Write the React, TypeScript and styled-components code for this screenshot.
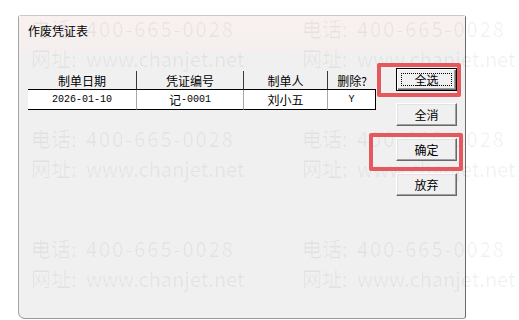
import React from "react";
import styled, { createGlobalStyle } from "styled-components";

const Global = createGlobalStyle`
  html, body { margin: 0; padding: 0; background: #ffffff; }
  body { font-family: "Noto Sans CJK SC", "Liberation Sans", sans-serif; }
`;

const Page = styled.div`
  position: relative;
  width: 519px;
  height: 320px;
  overflow: hidden;
  padding: 15px 0 0 18px;
  box-sizing: border-box;
  background: #ffffff;
`;

const Dialog = styled.div`
  width: 448px;
  height: 304px;
  box-sizing: border-box;
  border-style: solid;
  border-width: 1px;
  border-color: #c9c9c9 #6a6a6a #9a9a9a #a6a6a6;
  border-radius: 3px 3px 3px 7px;
  background: #f0f0f0;
  display: flex;
  flex-direction: column;
`;

const TitleBar = styled.div`
  height: 36px;
  padding: 7px 0 0 9px;
  box-sizing: border-box;
  background: linear-gradient(#f8f1f0, #f4efee);
  font-size: 12px;
  line-height: 16px;
  color: #000;
`;

const Body = styled.div`
  display: flex;
  align-items: flex-start;
  padding: 16px 0 0 9px;
  gap: 20px;
`;

const Table = styled.div`
  margin-top: 3px;
  display: grid;
  grid-template-columns: 109px 107px 84px 48px;
`;

const HeadCell = styled.div<{ $last?: boolean }>`
  height: 19px;
  box-sizing: border-box;
  border-bottom: 1px solid #000;
  border-right: ${(p) => (p.$last ? "none" : "1px solid #3a3a3a")};
  display: flex;
  align-items: center;
  justify-content: center;
  font-size: 12px;
  color: #000;
`;

const DataCell = styled.div<{ $last?: boolean }>`
  height: 20px;
  box-sizing: border-box;
  background: #fff;
  border-bottom: 1px solid #000;
  border-right: 1px solid ${(p) => (p.$last ? "#000" : "#a8a8a8")};
  display: flex;
  align-items: center;
  justify-content: center;
  font-size: 12px;
  color: #000;
`;

const Mono = styled.span`
  font-family: "Liberation Mono", "DejaVu Sans Mono", monospace;
  font-size: 10px;
`;

const ButtonColumn = styled.div`
  display: flex;
  flex-direction: column;
  gap: 12px;
`;

const ButtonWrap = styled.div`
  position: relative;
  z-index: 2;
`;

const Button = styled.button<{ $default?: boolean }>`
  position: relative;
  width: 61px;
  height: 23px;
  box-sizing: border-box;
  margin: 0;
  padding: 0;
  background: #f0f0f0;
  border: 1px solid;
  border-color: ${(p) =>
    p.$default ? "#000" : "#ffffff #696969 #696969 #ffffff"};
  box-shadow: ${(p) =>
    p.$default
      ? "inset 1px 1px #fff, inset -1px -1px #696969, inset -2px -2px #a0a0a0"
      : "inset -1px -1px #a0a0a0, inset 1px 1px #e3e3e3"};
  font-family: "Noto Sans CJK SC", sans-serif;
  font-size: 12px;
  color: #000;
  display: flex;
  align-items: center;
  justify-content: center;
`;

const FocusRect = styled.span`
  position: absolute;
  left: 4px;
  right: 4px;
  top: 4px;
  bottom: 4px;
  border: 1px dotted #000;
`;

const Highlight = styled.div<{ $l: number; $r: number; $t: number; $b: number }>`
  position: absolute;
  left: ${(p) => p.$l}px;
  right: ${(p) => p.$r}px;
  top: ${(p) => p.$t}px;
  bottom: ${(p) => p.$b}px;
  border: 4px solid #e4585e;
  border-radius: 2px;
  pointer-events: none;
  z-index: 3;
`;

const Watermark = styled.div`
  position: absolute;
  left: 0;
  top: 0;
  width: 100%;
  height: 100%;
  z-index: 1;
  pointer-events: none;
  display: grid;
  grid-template-columns: repeat(2, 271px);
  grid-auto-rows: 110px;
  padding: 14px 0 0 31px;
  box-sizing: border-box;
`;

const Tile = styled.div`
  font-family: "Noto Sans CJK SC", sans-serif;
  font-size: 20px;
  line-height: 30px;
  color: rgba(0, 0, 0, 0.058);
  white-space: nowrap;
`;

const WmLine = styled.div<{ $spacing: number }>`
  display: flex;
  letter-spacing: ${(p) => p.$spacing}px;
`;

const WmLabel = styled.span`
  width: 55px;
  flex: none;
  letter-spacing: 0;
`;

const rows = [
  { date: "2026-01-10", no: "0001", maker: "刘小五", del: "Y" },
];

export default function App() {
  return (
    <>
      <Global />
      <Page>
        <Dialog>
          <TitleBar>作废凭证表</TitleBar>
          <Body>
            <Table>
              <HeadCell>制单日期</HeadCell>
              <HeadCell>凭证编号</HeadCell>
              <HeadCell>制单人</HeadCell>
              <HeadCell $last>删除?</HeadCell>
              {rows.map((r) => (
                <React.Fragment key={r.no}>
                  <DataCell>
                    <Mono>{r.date}</Mono>
                  </DataCell>
                  <DataCell>
                    记<Mono>-{r.no}</Mono>
                  </DataCell>
                  <DataCell>{r.maker}</DataCell>
                  <DataCell $last>
                    <Mono>{r.del}</Mono>
                  </DataCell>
                </React.Fragment>
              ))}
            </Table>
            <ButtonColumn>
              <ButtonWrap>
                <Button $default>
                  <FocusRect />
                  全选
                </Button>
                <Highlight $l={-19} $r={-4} $t={-5} $b={-6} />
              </ButtonWrap>
              <ButtonWrap>
                <Button>全消</Button>
              </ButtonWrap>
              <ButtonWrap>
                <Button>确定</Button>
                <Highlight $l={-27} $r={-6} $t={-5} $b={-10} />
              </ButtonWrap>
              <ButtonWrap>
                <Button>放弃</Button>
              </ButtonWrap>
            </ButtonColumn>
          </Body>
        </Dialog>
        <Watermark>
          {Array.from({ length: 6 }).map((_, i) => (
            <Tile key={i}>
              <WmLine $spacing={2}>
                <WmLabel>电话:</WmLabel>
                400-665-0028
              </WmLine>
              <WmLine $spacing={0}>
                <WmLabel>网址:</WmLabel>
                www.chanjet.net
              </WmLine>
            </Tile>
          ))}
        </Watermark>
      </Page>
    </>
  );
}
